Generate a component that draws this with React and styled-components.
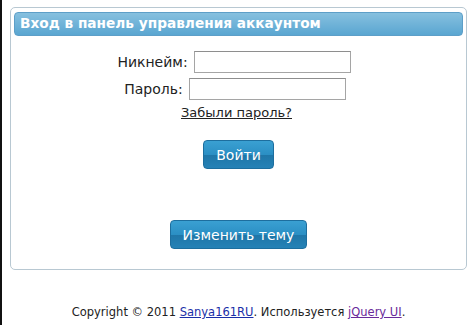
import styled, { createGlobalStyle } from 'styled-components';

const Global = createGlobalStyle`
  html, body {
    margin: 0;
    padding: 0;
    background: #fff;
  }
  body {
    font-family: 'DejaVu Sans', Verdana, sans-serif;
    color: #222;
  }
`;

const Page = styled.div`
  min-height: 325px;
  box-sizing: border-box;
  border-left: 2px solid #111;
  padding: 7px 8px 0 8px;
`;

const Panel = styled.div`
  border: 1px solid #b8c8d2;
  border-radius: 5px;
  background: #fff;
  padding: 4px 3px 20px 3px;
`;

const Header = styled.div`
  height: 24px;
  box-sizing: border-box;
  border: 1px solid #5d9fc8;
  border-radius: 4px;
  background: linear-gradient(#86c0df, #5aa6d1);
  color: #fff;
  font-weight: bold;
  font-size: 13.7px;
  line-height: 21px;
  padding-left: 5px;
`;

const Form = styled.div`
  display: flex;
  flex-direction: column;
  align-items: center;
  padding-top: 15px;
`;

const Row = styled.label`
  display: flex;
  align-items: center;
  gap: 6px;
  font-size: 14px;
  margin: 0 ${(p) => p.$shift}px 5px 0;
`;

const Input = styled.input`
  width: 157px;
  height: 22px;
  box-sizing: border-box;
  border: 1px solid #a5a5a5;
  border-top-color: #8e8e8e;
  margin: 0;
`;

const Forgot = styled.a`
  font-size: 13px;
  color: #222;
  text-decoration: underline;
  margin-right: 4px;
`;

const Button = styled.button`
  font-family: inherit;
  font-size: 14px;
  color: #fff;
  border: 1px solid #1d6e9e;
  border-radius: 4px;
  background: linear-gradient(#3aa0d2 0%, #2b8fc4 50%, #1f76a8 52%, #2582b6 100%);
  padding: 0 12px;
  height: 29px;
  margin-top: ${(p) => p.$top}px;
  cursor: pointer;
`;

const Footer = styled.div`
  text-align: center;
  font-size: 11.5px;
  margin-top: 35px;
  color: #222;
`;

const Link = styled.a`
  color: ${(p) => p.$color};
  text-decoration: underline;
`;

export default function App() {
  return (
    <>
      <Global />
      <Page>
        <Panel>
          <Header>Вход в панель управления аккаунтом</Header>
          <Form>
            <Row $shift={9}>
              Никнейм: <Input type="text" />
            </Row>
            <Row $shift={7}>
              Пароль: <Input type="password" />
            </Row>
            <Forgot href="#">Забыли пароль?</Forgot>
            <Button $top={20}>Войти</Button>
            <Button $top={51}>Изменить тему</Button>
          </Form>
        </Panel>
        <Footer>
          Copyright © 2011 <Link href="#" $color="#1a2fa8">Sanya161RU</Link>. Используется{' '}
          <Link href="#" $color="#6a2a9a">jQuery UI</Link>.
        </Footer>
      </Page>
    </>
  );
}
